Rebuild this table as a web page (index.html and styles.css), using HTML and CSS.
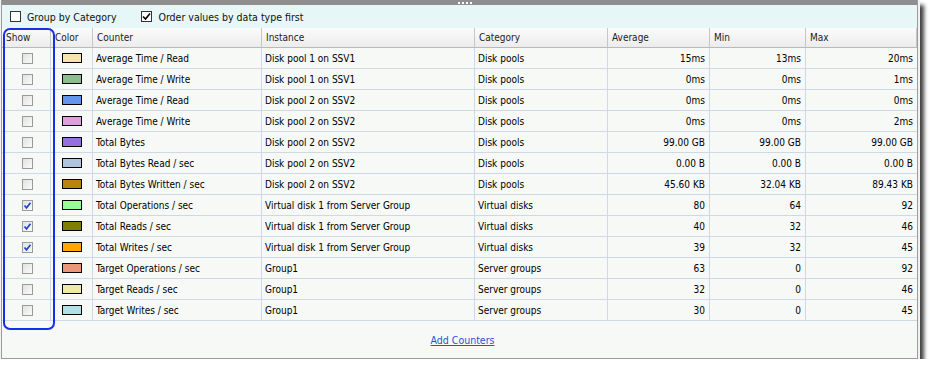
FILE: index.html
```html
<!DOCTYPE html>
<html lang="en">
  <head>
    <meta charset="UTF-8" />
    <title>Counters</title>
    <link rel="stylesheet" href="styles.css">
  </head>
  <body>
    <div class="panel">
      <div class="grip-bar"><span class="grip"><i></i><i></i><i></i><i></i></span></div>

      <div class="toolbar">
        <label class="opt"><span class="box"></span>Group by Category</label>
        <label class="opt"><span class="box checked">
          <svg width="9" height="9" viewBox="0 0 9 9"><path d="M1 4.5 L3.5 7 L8 1.5" fill="none" stroke="#000" stroke-width="1.6"/></svg>
        </span>Order values by data type first</label>
      </div>

      <div class="grid">
        <div class="row head">
          <div class="cell">Show</div>
          <div class="cell">Color</div>
          <div class="cell">Counter</div>
          <div class="cell">Instance</div>
          <div class="cell">Category</div>
          <div class="cell">Average</div>
          <div class="cell">Min</div>
          <div class="cell">Max</div>
        </div>
        <div id="rows"></div>
      </div>

      <div class="footer">
        <a href="#" class="add-link">Add Counters</a>
      </div>

      <!-- highlight drawn over the Show column -->
      <div class="highlight"></div>
    </div>

    <script>
      const data = [
        [0, "#f7e2b2", "Average Time / Read", "Disk pool 1 on SSV1", "Disk pools", "15ms", "13ms", "20ms"],
        [0, "#8fbc8f", "Average Time / Write", "Disk pool 1 on SSV1", "Disk pools", "0ms", "0ms", "1ms"],
        [0, "#6495ed", "Average Time / Read", "Disk pool 2 on SSV2", "Disk pools", "0ms", "0ms", "0ms"],
        [0, "#dda0dd", "Average Time / Write", "Disk pool 2 on SSV2", "Disk pools", "0ms", "0ms", "2ms"],
        [0, "#9370db", "Total Bytes", "Disk pool 2 on SSV2", "Disk pools", "99.00 GB", "99.00 GB", "99.00 GB"],
        [0, "#b0c4de", "Total Bytes Read / sec", "Disk pool 2 on SSV2", "Disk pools", "0.00 B", "0.00 B", "0.00 B"],
        [0, "#b8860b", "Total Bytes Written / sec", "Disk pool 2 on SSV2", "Disk pools", "45.60 KB", "32.04 KB", "89.43 KB"],
        [1, "#98fb98", "Total Operations / sec", "Virtual disk 1 from Server Group", "Virtual disks", "80", "64", "92"],
        [1, "#808000", "Total Reads / sec", "Virtual disk 1 from Server Group", "Virtual disks", "40", "32", "46"],
        [1, "#ffa500", "Total Writes / sec", "Virtual disk 1 from Server Group", "Virtual disks", "39", "32", "45"],
        [0, "#e9967a", "Target Operations / sec", "Group1", "Server groups", "63", "0", "92"],
        [0, "#eee8aa", "Target Reads / sec", "Group1", "Server groups", "32", "0", "46"],
        [0, "#b0e0e6", "Target Writes / sec", "Group1", "Server groups", "30", "0", "45"],
      ];

      const tick =
        '<svg width="9" height="9" viewBox="0 0 9 9"><path d="M1.5 4.5 L3.5 6.8 L7.5 1.8" fill="none" stroke="#2146c8" stroke-width="1.7"/></svg>';

      document.getElementById("rows").innerHTML = data
        .map(
          (r) => `
        <div class="row">
          <div class="cell c-show"><span class="chk">${r[0] ? tick : ""}</span></div>
          <div class="cell c-color"><span class="swatch" style="background:${r[1]}"></span></div>
          <div class="cell">${r[2]}</div>
          <div class="cell">${r[3]}</div>
          <div class="cell">${r[4]}</div>
          <div class="cell num">${r[5]}</div>
          <div class="cell num">${r[6]}</div>
          <div class="cell num">${r[7]}</div>
        </div>`
        )
        .join("");
    </script>
  </body>
</html>
```

FILE: styles.css
```css
body {
  margin: 0;
  background: #fff;
  font-family: "DejaVu Sans Condensed", "DejaVu Sans", sans-serif;
  font-size: 10px;
  color: #000;
}

.panel {
  position: relative;
  width: 915px;
  height: 358px;
  margin-left: 1px;
  border: 1px solid #9c9c9c;
  border-top: none;
  background: #f6f9f5;
  box-shadow: 0 0 0 2px #f2f2f2, 6px 5px 4px rgba(0, 0, 0, 0.75);
}

.grip-bar {
  height: 5px;
  background: #8e8e8e;
  display: flex;
  justify-content: center;
  align-items: center;
}

.grip {
  display: flex;
  gap: 2px;
  margin-left: 10px;
}

.grip i {
  width: 2px;
  height: 2px;
  background: #fff;
}

.toolbar {
  height: 23px;
  background: #e7f6f6;
  display: flex;
  align-items: center;
  gap: 25px;
  padding-left: 8px;
  box-sizing: border-box;
  font-size: 10.5px;
  color: #111;
}

.opt {
  display: flex;
  align-items: center;
  gap: 6px;
}

.box {
  width: 9px;
  height: 9px;
  border: 1px solid #333;
  background: #fff;
  display: flex;
  align-items: center;
  justify-content: center;
}

.row {
  display: grid;
  grid-template-columns: 49px 42px 169px 213px 133px 102px 96px 111px;
  height: 21px;
}

.cell {
  box-sizing: border-box;
  border-right: 1px solid #cfd8e6;
  border-bottom: 1px solid #cfd8e6;
  padding: 0 3px;
  display: flex;
  align-items: center;
  white-space: nowrap;
  overflow: hidden;
}

.cell:last-child {
  border-right: none;
}

.head {
  height: 20px;
}

.head .cell {
  background: linear-gradient(#fbfbfb, #ececec);
  border-right: 1px solid #c6c6c6;
  border-bottom: 1px solid #b9b9b9;
  color: #222;
  padding-left: 4px;
}

.num {
  justify-content: flex-end;
  padding-right: 4px;
}

.c-show,
.c-color {
  justify-content: center;
}

.c-show {
  padding-left: 5px;
}

.chk {
  width: 9px;
  height: 9px;
  border: 1px solid #9a9a9a;
  background: linear-gradient(135deg, #e2e2e2, #fafafa);
  display: flex;
  align-items: center;
  justify-content: center;
}

.swatch {
  width: 18px;
  height: 8px;
  border: 1px solid #000;
}

.footer {
  height: 37px;
  display: flex;
  align-items: center;
  justify-content: center;
  padding-left: 6px;
}

.add-link {
  color: #2b4fe0;
  font-size: 10.5px;
}

.highlight {
  position: absolute;
  left: 1px;
  top: 28px;
  width: 48px;
  height: 298px;
  border: 2px solid #1730e6;
  border-radius: 7px;
}
```
